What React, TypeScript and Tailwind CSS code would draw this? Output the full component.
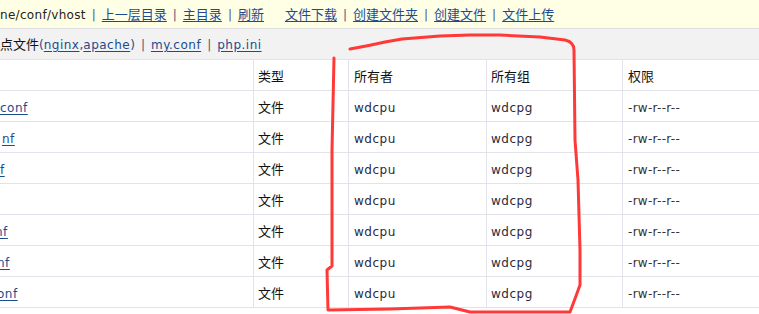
import React from "react";

const font = { fontFamily: '"DejaVu Sans", "Noto Sans CJK SC", sans-serif' };

function Sep() {
  return <span className="mx-[6px] text-[#4a5878]">|</span>;
}

function Lnk({ children, zh }: { children: React.ReactNode; zh?: boolean }) {
  return (
    <a
      href="#"
      className={`text-[#1b4b91] underline underline-offset-2 ${zh ? "text-[13px]" : "tracking-[0.5px]"}`}
    >
      {children}
    </a>
  );
}

const rows = [
  { name: "conf", cls: "ml-0" },
  { name: "nf", cls: "ml-[2px]" },
  { name: "f", cls: "ml-0" },
  { name: "", cls: "ml-0" },
  { name: "nf", cls: "ml-[-5px]" },
  { name: "nf", cls: "ml-[-3px]" },
  { name: "onf", cls: "ml-[-3px]" },
];

export default function App() {
  return (
    <div className="relative h-[314px] w-[759px] overflow-hidden bg-white text-[12px] text-[#222]" style={font}>
      {/* path bar */}
      <div className="flex h-[29px] items-center whitespace-nowrap border-b border-[#dedee2] bg-[#ffffe6] pt-[1px] text-[#222]">
        <span className="tracking-[0.3px]">ne/conf/vhost</span>
        <Sep />
        <Lnk zh>上一层目录</Lnk>
        <Sep />
        <Lnk zh>主目录</Lnk>
        <Sep />
        <Lnk zh>刷新</Lnk>
        <span className="w-[21px]" />
        <Lnk zh>文件下载</Lnk>
        <Sep />
        <Lnk zh>创建文件夹</Lnk>
        <Sep />
        <Lnk zh>创建文件</Lnk>
        <Sep />
        <Lnk zh>文件上传</Lnk>
      </div>

      {/* config shortcuts */}
      <div className="flex h-[30px] items-center whitespace-nowrap bg-[#f2f2f2] pt-[1px]">
        <span className="text-[13px] text-[#111]">点文件</span>
        <span className="text-[#1b4b91]">(</span>
        <Lnk>nginx</Lnk>
        <span className="text-[#1b4b91]">,</span>
        <Lnk>apache</Lnk>
        <span className="text-[#1b4b91]">)</span>
        <Sep />
        <Lnk>my.conf</Lnk>
        <Sep />
        <Lnk>php.ini</Lnk>
      </div>

      {/* file table */}
      <div className="border-t border-[#e2e2ea]">
        <div className="flex h-[31px] items-stretch border-b border-[#e2e2ea] text-[13px] text-[#111]">
          <div className="w-[254px] border-r border-[#e2e2ea]" />
          <div className="flex w-[95px] items-center border-r border-[#e2e2ea] pl-[4px] pt-[3px]">类型</div>
          <div className="flex w-[138px] items-center border-r border-[#e2e2ea] pl-[5px] pt-[3px]">所有者</div>
          <div className="flex w-[136px] items-center border-r border-[#e2e2ea] pl-[4px] pt-[3px]">所有组</div>
          <div className="flex flex-1 items-center pl-[5px] pt-[3px]">权限</div>
        </div>
        {rows.map((r, i) => (
          <div key={i} className="flex h-[31px] items-stretch border-b border-[#e2e2ea]">
            <div className="flex w-[254px] items-center overflow-hidden border-r border-[#e2e2ea] pt-[3px]">
              {r.name && (
                <span className={r.cls}>
                  <Lnk>{r.name}</Lnk>
                </span>
              )}
            </div>
            <div className="flex w-[95px] items-center border-r border-[#e2e2ea] pl-[4px] pt-[3px] text-[13px] text-[#111]">
              文件
            </div>
            <div className="flex w-[138px] items-center border-r border-[#e2e2ea] pl-[5px] pt-[3px] tracking-[0.5px] text-[#2a2a40]">
              wdcpu
            </div>
            <div className="flex w-[136px] items-center border-r border-[#e2e2ea] pl-[4px] pt-[3px] tracking-[0.5px] text-[#2a2a40]">
              wdcpg
            </div>
            <div className="flex flex-1 items-center pl-[5px] pt-[3px] tracking-[0.3px] text-[#333]">-rw-r--r--</div>
          </div>
        ))}
      </div>

      {/* hand-drawn red annotation */}
      <svg className="pointer-events-none absolute left-0 top-0" width="759" height="314" viewBox="0 0 759 314">
        <path
          d="M350 49 C362 47 372 45 385 42 L402 39 L440 36 L470 35 L500 35 L540 37 L565 40 Q574 42 574 50 L575 140 L578 180 L580 250 L580 285 L576 296 L570 312 L470 312 L450 307 L390 309 L328 310 L327 270 L332 266 L332 150 L334 58"
          fill="none"
          stroke="#ff3838"
          strokeWidth="3"
          strokeLinecap="round"
          strokeLinejoin="round"
        />
      </svg>
    </div>
  );
}
